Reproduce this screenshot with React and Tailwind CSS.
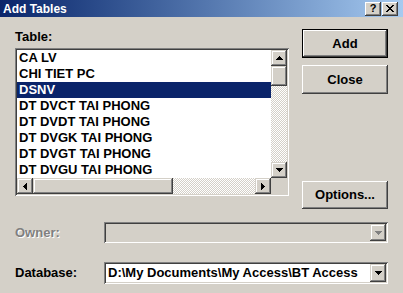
import React from "react";

const tables = [
  "CA LV",
  "CHI TIET PC",
  "DSNV",
  "DT DVCT TAI PHONG",
  "DT DVDT TAI PHONG",
  "DT DVGK TAI PHONG",
  "DT DVGT TAI PHONG",
  "DT DVGU TAI PHONG",
];

// little scrollbar / combo arrow triangles
function Arrow({ dir, color = "#000000" }) {
  const pts = {
    up: "3.5,0 7,4 0,4",
    down: "0,0 7,0 3.5,4",
    left: "0,3.5 4,0 4,7",
    right: "0,0 4,3.5 0,7",
  }[dir];
  const vertical = dir === "up" || dir === "down";
  return (
    <svg
      width={vertical ? 7 : 4}
      height={vertical ? 4 : 7}
      viewBox={vertical ? "0 0 7 4" : "0 0 4 7"}
      shapeRendering="crispEdges"
    >
      <polygon points={pts} fill={color} />
    </svg>
  );
}

function ScrollBtn({ dir }) {
  return (
    <div className="w-[16px] h-[16px] shrink-0 flex items-center justify-center bg-[#d4d0c8] shadow-[inset_-1px_-1px_#404040,inset_1px_1px_#d4d0c8,inset_-2px_-2px_#808080,inset_2px_2px_#ffffff]">
      <Arrow dir={dir} />
    </div>
  );
}

function DialogButton({ children, isDefault, className = "" }) {
  return (
    <div
      className={`w-[86px] flex ${isDefault ? "border border-black" : ""} ${className}`}
    >
      <div className="flex-1 flex items-center justify-center bg-[#d4d0c8] shadow-[inset_-1px_-1px_#404040,inset_1px_1px_#ffffff,inset_-2px_-2px_#808080,inset_2px_2px_#d4d0c8]">
        {children}
      </div>
    </div>
  );
}

function Combo({ value, disabled }) {
  return (
    <div className="w-[284px] flex p-[2px] shadow-[inset_1px_1px_#808080,inset_-1px_-1px_#ffffff,inset_2px_2px_#404040,inset_-2px_-2px_#d4d0c8]">
      <div
        className={`flex-1 overflow-hidden whitespace-nowrap pl-[2px] flex items-center ${
          disabled ? "bg-[#d4d0c8]" : "bg-white"
        }`}
      >
        {value}
      </div>
      <div className="w-[16px] flex items-center justify-center bg-[#d4d0c8] shadow-[inset_-1px_-1px_#404040,inset_1px_1px_#d4d0c8,inset_-2px_-2px_#808080,inset_2px_2px_#ffffff]">
        <Arrow dir="down" color={disabled ? "#808080" : "#000000"} />
      </div>
    </div>
  );
}

export default function App() {
  return (
    <div className="w-[403px] h-[293px] overflow-hidden bg-[#d4d0c8] font-['Liberation_Sans',Arial,sans-serif] font-bold text-[13px] leading-[16px] text-black select-none">
      {/* Title bar */}
      <div className="h-[17px] flex items-center bg-linear-to-r from-[#0a246a] to-[#a6caf0] pl-[3px] pr-[5px]">
        <span className="flex-1 text-white text-[12px]">Add Tables</span>
        <div className="w-[16px] h-[14px] flex items-center justify-center bg-[#d4d0c8] text-[11px] leading-[11px] shadow-[inset_-1px_-1px_#404040,inset_1px_1px_#ffffff,inset_-2px_-2px_#808080,inset_2px_2px_#d4d0c8]">
          ?
        </div>
        <div className="ml-[1px] w-[16px] h-[14px] flex items-center justify-center bg-[#d4d0c8] shadow-[inset_-1px_-1px_#404040,inset_1px_1px_#ffffff,inset_-2px_-2px_#808080,inset_2px_2px_#d4d0c8]">
          <svg width="8" height="7" viewBox="0 0 8 7" shapeRendering="crispEdges">
            <path d="M0 0h2v1h-2zM6 0h2v1h-2zM1 1h2v1h-2zM5 1h2v1h-2zM2 2h4v1h-4zM3 3h2v1h-2zM2 4h4v1h-4zM1 5h2v1h-2zM5 5h2v1h-2zM0 6h2v1h-2zM6 6h2v1h-2z" fill="#000" />
          </svg>
        </div>
      </div>

      <div className="px-[15px]">
        <div className="flex">
          {/* Table list */}
          <div className="w-[276px] pt-[12px]">
            <div>Table:</div>
            <div className="mt-[3px] h-[148px] p-[2px] bg-white flex flex-col shadow-[inset_1px_1px_#808080,inset_-1px_-1px_#ffffff,inset_2px_2px_#404040,inset_-2px_-2px_#d4d0c8]">
              <div className="flex h-[128px]">
                <div className="flex-1 flex flex-col overflow-hidden">
                  {tables.map((t) => (
                    <div
                      key={t}
                      className={`h-[16px] pl-[2px] whitespace-nowrap ${
                        t === "DSNV" ? "bg-[#0a246a] text-white" : ""
                      }`}
                    >
                      {t}
                    </div>
                  ))}
                </div>
                <div className="w-[16px] flex flex-col bg-[conic-gradient(#ffffff_25%,#d4d0c8_0_50%,#ffffff_0_75%,#d4d0c8_0)] bg-[length:2px_2px]">
                  <ScrollBtn dir="up" />
                  <div className="h-[20px] bg-[#d4d0c8] shadow-[inset_-1px_-1px_#404040,inset_1px_1px_#d4d0c8,inset_-2px_-2px_#808080,inset_2px_2px_#ffffff]" />
                  <div className="flex-1" />
                  <ScrollBtn dir="down" />
                </div>
              </div>
              <div className="flex h-[16px]">
                <div className="flex-1 flex bg-[conic-gradient(#ffffff_25%,#d4d0c8_0_50%,#ffffff_0_75%,#d4d0c8_0)] bg-[length:2px_2px]">
                  <ScrollBtn dir="left" />
                  <div className="w-[140px] bg-[#d4d0c8] shadow-[inset_-1px_-1px_#404040,inset_1px_1px_#d4d0c8,inset_-2px_-2px_#808080,inset_2px_2px_#ffffff]" />
                  <div className="flex-1" />
                  <ScrollBtn dir="right" />
                </div>
                <div className="w-[16px] bg-[#d4d0c8]" />
              </div>
            </div>
          </div>

          {/* Buttons */}
          <div className="ml-[13px] pt-[12px] flex flex-col">
            <DialogButton isDefault className="h-[29px]">Add</DialogButton>
            <DialogButton className="h-[29px] mt-[7px]">Close</DialogButton>
            <DialogButton className="h-[28px] mt-[87px]">Options...</DialogButton>
          </div>
        </div>

        {/* Owner */}
        <div className="mt-[13px] flex items-center h-[21px]">
          <div className="w-[91px] text-[#808080] [text-shadow:1px_1px_0_#ffffff]">Owner:</div>
          <div className="h-[21px] flex">
            <Combo value="" disabled />
          </div>
        </div>

        {/* Database */}
        <div className="mt-[19px] flex items-center h-[22px]">
          <div className="w-[91px]">Database:</div>
          <div className="h-[22px] flex">
            <Combo value="D:\My Documents\My Access\BT Access" />
          </div>
        </div>
      </div>
    </div>
  );
}
